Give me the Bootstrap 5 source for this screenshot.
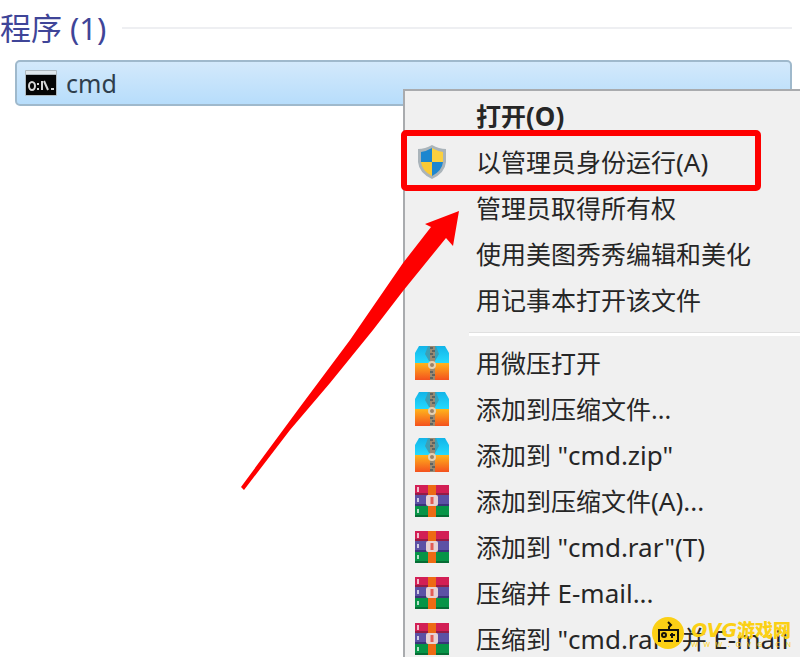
<!DOCTYPE html>
<html lang="zh-CN">
<head>
<meta charset="utf-8">
<meta name="viewport" content="width=device-width, initial-scale=1">
<title>程序</title>
<link href="https://cdn.jsdelivr.net/npm/bootstrap@5.3.0/dist/css/bootstrap.min.css" rel="stylesheet">
<style>
  body { font-family: "Noto Sans", "Noto Sans CJK SC", sans-serif; background: #fff; color: #1c1c1c; }
  .start-panel { height: 100vh; }
  .group-title { font-size: 31px; line-height: 40px; color: #3f4598; }
  .group-rule { height: 2px; background: #eeeff2; }
  .result { height: 46px; margin: 0 8px 0 15px; padding: 0 8px; gap: 9px; border: 2px solid #9fb9cc; border-radius: 5px;
    background: linear-gradient(#d3e9fb, #b7ddfb); font-size: 25px; line-height: 40px; color: #2f3e4c; }
  .ctx { top: 89px; left: 403px; right: 0; padding: 2px 0; background: #f0f0f0; border: 2px solid #a9abae; border-right: 0; z-index: 1; }
  .ctx-item { height: 46px; padding: 0 0 0 9px; gap: 26px; font-size: 25px; line-height: 46px; color: #262626; background: none; border: 0; }
  .ctx-item:hover { background: #e3ecf6; }
  .ctx-item svg, .ctx-gap { width: 36px; height: 36px; flex: none; }
  .ctx-item .lat { font-size: 26px; line-height: 1; }
  .ctx-sep { height: 17px; padding: 9px 0 0 64px; }
  .ctx-sep hr { margin: 0; border-top: 1px solid #e0e0e0; border-bottom: 3px solid #fff; opacity: 1; }
  .focus-box { top: 130px; left: 401px; width: 360px; height: 61px; border: 6px solid #fe0000; border-radius: 5px; z-index: 2; pointer-events: none; }
  .pointer { top: 208px; left: 238px; z-index: 2; pointer-events: none; }
  .brand { right: 9px; bottom: 8px; gap: 7px; z-index: 3; color: #fbd015; }
  .brand-name { font: 900 18px/22px "Noto Sans CJK SC", sans-serif; }
  .brand-name i { font-family: "DejaVu Sans", sans-serif; font-weight: 700; font-size: 19px; }
  .brand-url { font-size: 7px; line-height: 8px; }
</style>
</head>
<body>
<main class="start-panel position-relative overflow-hidden">
  <div class="d-flex align-items-center gap-3 pt-2 pe-2 mb-2 pb-1">
    <h1 class="group-title fw-normal m-0 text-nowrap">程序 (1)</h1>
    <div class="group-rule flex-grow-1"></div>
  </div>
  <a href="#cmd" class="result d-flex align-items-center text-decoration-none">
    <svg width="32" height="26" viewBox="0 0 32 26" aria-hidden="true">
      <rect width="32" height="26" rx="1" fill="#aeb8be"/><rect x="1" y="1" width="30" height="3" fill="#dfe7ec"/><rect x="1" y="5" width="30" height="20" fill="#050505"/>
      <g fill="none" stroke="#d5d5d5" stroke-width="2"><ellipse cx="7" cy="16" rx="3" ry="4"/><path d="M13 13v2M13 18v2M17 11v9M19 11l4 9M26 19h3"/></g>
    </svg>
    <span>cmd</span>
  </a>

  <svg width="0" height="0" class="position-absolute" aria-hidden="true">
    <defs>
      <linearGradient id="sky" x2="0" y2="1"><stop stop-color="#13b4e8"/><stop offset="1" stop-color="#25dcff"/></linearGradient>
      <linearGradient id="sun" x2="0" y2="1"><stop stop-color="#ffb51c"/><stop offset="1" stop-color="#f4511e"/></linearGradient>
      <symbol id="zip" viewBox="0 0 36 36">
        <path d="M5 1h26l4 7v11H1V8z" fill="url(#sky)"/><path d="M1 18h34v17H1z" fill="url(#sun)"/>
        <path d="M14 1h8l3 8-4 7h-6l-4-7z" fill="#3d9fb5"/><path d="M16 1h5v34h-5z" fill="#9a8a72"/>
        <path d="M16 3h3M18 6h3M16 9h3M18 12h3M16 27h3M18 30h3M16 33h3" stroke="#5f6462" stroke-width="2"/>
        <circle cx="18" cy="20" r="4" fill="#e5d2b4"/><circle cx="18" cy="20" r="2" fill="#9b8267"/>
      </symbol>
      <symbol id="rar" viewBox="0 0 36 36">
        <path d="M1 2h34v10H1z" fill="#d21f55"/><path d="M1 12h34v11H1z" fill="#5c51a5"/><path d="M1 23h34v11H1z" fill="#079447"/>
        <path d="M1 10h34v2H1z" fill="#941c45"/><path d="M1 21h34v2H1z" fill="#3a3478"/><path d="M1 32h34v2H1z" fill="#066c34"/>
        <path d="M4 4v5M4 15v4M4 26v4" stroke="#fff" stroke-opacity=".7" stroke-width="2"/>
        <path d="M14 2h8v32h-8z" fill="#ed6a14"/><rect x="12" y="12" width="12" height="11" rx="2" fill="#e7d2d3"/><path d="M18 14v7" stroke="#e35c55" stroke-width="3"/>
      </symbol>
    </defs>
  </svg>

  <div class="ctx position-absolute" role="menu">
    <button type="button" role="menuitem" class="ctx-item d-flex align-items-center w-100 text-start text-nowrap fw-bold"><span class="ctx-gap"></span><span>打开<span class="lat">(O)</span></span></button>
    <button type="button" role="menuitem" class="ctx-item d-flex align-items-center w-100 text-start text-nowrap">
      <svg viewBox="0 0 36 36" aria-hidden="true"><path d="M18 1Q25 5 32 5V18Q31 29 18 35Q5 29 4 18V5Q11 5 18 1z" fill="#aab4ba"/><path d="M18 4V18H7V8Q13 7 18 4z" fill="#1d86cf"/><path d="M18 4Q23 7 29 8V18H18z" fill="#fbd03f"/><path d="M7 18H18V32Q8 27 7 18z" fill="#fbca35"/><path d="M18 18H29Q28 27 18 32z" fill="#1d86cf"/></svg>
      <span>以管理员身份运行<span class="lat">(A)</span></span></button>
    <button type="button" role="menuitem" class="ctx-item d-flex align-items-center w-100 text-start text-nowrap"><span class="ctx-gap"></span><span>管理员取得所有权</span></button>
    <button type="button" role="menuitem" class="ctx-item d-flex align-items-center w-100 text-start text-nowrap"><span class="ctx-gap"></span><span>使用美图秀秀编辑和美化</span></button>
    <button type="button" role="menuitem" class="ctx-item d-flex align-items-center w-100 text-start text-nowrap"><span class="ctx-gap"></span><span>用记事本打开该文件</span></button>
    <div class="ctx-sep"><hr></div>
    <button type="button" role="menuitem" class="ctx-item d-flex align-items-center w-100 text-start text-nowrap"><svg aria-hidden="true"><use href="#zip"/></svg><span>用微压打开</span></button>
    <button type="button" role="menuitem" class="ctx-item d-flex align-items-center w-100 text-start text-nowrap"><svg aria-hidden="true"><use href="#zip"/></svg><span>添加到压缩文件...</span></button>
    <button type="button" role="menuitem" class="ctx-item d-flex align-items-center w-100 text-start text-nowrap"><svg aria-hidden="true"><use href="#zip"/></svg><span>添加到 <span class="lat">"cmd.zip"</span></span></button>
    <button type="button" role="menuitem" class="ctx-item d-flex align-items-center w-100 text-start text-nowrap"><svg aria-hidden="true"><use href="#rar"/></svg><span>添加到压缩文件<span class="lat">(A)...</span></span></button>
    <button type="button" role="menuitem" class="ctx-item d-flex align-items-center w-100 text-start text-nowrap"><svg aria-hidden="true"><use href="#rar"/></svg><span>添加到 <span class="lat">"cmd.rar"(T)</span></span></button>
    <button type="button" role="menuitem" class="ctx-item d-flex align-items-center w-100 text-start text-nowrap"><svg aria-hidden="true"><use href="#rar"/></svg><span>压缩并 <span class="lat">E-mail...</span></span></button>
    <button type="button" role="menuitem" class="ctx-item d-flex align-items-center w-100 text-start text-nowrap"><svg aria-hidden="true"><use href="#rar"/></svg><span>压缩到 <span class="lat">"cmd.rar" </span>并 <span class="lat">E-mail</span></span></button>
  </div>

  <div class="focus-box position-absolute"></div>
  <svg class="pointer position-absolute" width="224" height="284" viewBox="0 0 224 284" aria-hidden="true">
    <path d="M221 3L187 16L193 19L165 55L112 132L62 199L3 279L6 282L52 222L92 175L135 122L165 83L208 30L215 38z" fill="#fe0000"/>
  </svg>

  <div class="brand position-absolute d-flex align-items-center">
    <svg width="32" height="32" viewBox="0 0 32 32" aria-hidden="true"><circle cx="16" cy="16" r="16" fill="#fbd015"/><g fill="none" stroke="#15130a" stroke-width="2"><path d="M9 24H7V13H26V24H24M12 24H21M17 13V10L19 8L16 5"/><circle cx="12" cy="18" r="2"/><path d="M18 18h5M20 16v5"/></g></svg>
    <div class="text-nowrap">
      <div class="brand-name"><i>OVG</i>游戏网</div>
      <div class="brand-url d-flex justify-content-between"><span>W</span><span>W</span><span>W</span><span>.</span><span>O</span><span>V</span><span>G</span><span>.</span><span>C</span><span>N</span></div>
    </div>
  </div>
</main>
<script src="https://cdn.jsdelivr.net/npm/bootstrap@5.3.0/dist/js/bootstrap.bundle.min.js"></script>
</body>
</html>
